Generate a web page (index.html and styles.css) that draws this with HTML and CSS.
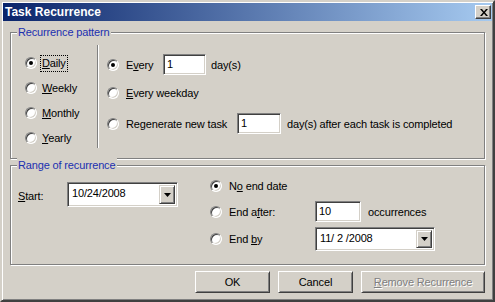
FILE: index.html
```html
<!DOCTYPE html>
<html>
<head>
<meta charset="utf-8">
<link rel="stylesheet" href="styles.css">
</head>
<body>
<div class="window">
  <div class="titlebar">
    <span class="title">Task Recurrence</span>
    <span class="close"><svg width="8" height="7" viewBox="0 0 8 7"><path d="M0 0h2l2 2.5L6 0h2L5 3.5 8 7H6L4 4.5 2 7H0l3-3.5z" fill="#000"/></svg></span>
  </div>
  <div class="content">
    <div class="group pattern">
      <span class="legend">Recurrence pattern</span>
      <div class="freq">
        <div class="opt"><span class="radio on"></span><span class="lbl focus"><u>D</u>aily</span></div>
        <div class="opt"><span class="radio"></span><span class="lbl"><u>W</u>eekly</span></div>
        <div class="opt"><span class="radio"></span><span class="lbl"><u>M</u>onthly</span></div>
        <div class="opt"><span class="radio"></span><span class="lbl"><u>Y</u>early</span></div>
      </div>
      <div class="sep"></div>
      <div class="pattern-opts">
        <div class="prow r1"><span class="radio on"></span><span class="plbl every">E<u>v</u>ery</span><span class="field w-every">1</span><span class="after">day(s)</span></div>
        <div class="prow r2"><span class="radio"></span><span class="plbl"><u>E</u>very weekday</span></div>
        <div class="prow r3"><span class="radio"></span><span class="plbl regen">Regenerate new task</span><span class="field w-regen">1</span><span class="after2">day(s) after each task is completed</span></div>
      </div>
    </div>
    <div class="group range">
      <span class="legend">Range of recurrence</span>
      <div class="start">
        <span class="start-lbl"><u>S</u>tart:</span>
        <div class="combo start-combo"><span class="cval">10/24/2008</span><span class="drop"><svg width="7" height="4" viewBox="0 0 7 4"><path d="M0 0h7L3.5 4z" fill="#000"/></svg></span></div>
      </div>
      <div class="ends">
        <div class="erow e1"><span class="radio on"></span><span class="elbl">N<u>o</u> end date</span></div>
        <div class="erow e2"><span class="ecell"><span class="radio"></span><span class="elbl">End a<u>f</u>ter:</span></span><span class="field w-occ">10</span><span class="after3">occurrences</span></div>
        <div class="erow e3"><span class="ecell"><span class="radio"></span><span class="elbl">End <u>b</u>y</span></span><div class="combo end-combo"><span class="cval">11/ 2 /2008</span><span class="drop"><svg width="7" height="4" viewBox="0 0 7 4"><path d="M0 0h7L3.5 4z" fill="#000"/></svg></span></div></div>
      </div>
    </div>
    <div class="buttons">
      <span class="btn ok">OK</span>
      <span class="btn cancel">Cancel</span>
      <span class="btn remove disabled"><u>R</u>emove Recurrence</span>
    </div>
  </div>
</div>
</body>
</html>
```

FILE: styles.css
```css
* { box-sizing: border-box; }
html, body { margin: 0; padding: 0; }
body {
  width: 495px;
  height: 302px;
  background: #d4d0c8;
  font-family: "Liberation Sans", Arial, sans-serif;
  font-size: 11px;
  letter-spacing: -0.15px;
  color: #000;
}
u { text-decoration: underline; text-underline-offset: 1px; }
.window {
  width: 495px;
  height: 302px;
  background: #d4d0c8;
  border: 2px solid;
  border-color: #d4d0c8 #404040 #404040 #d4d0c8;
  box-shadow: inset 1px 1px 0 #fff, inset -1px -1px 0 #808080;
  padding: 1px;
  display: flex;
  flex-direction: column;
}
.titlebar {
  height: 18px;
  background: linear-gradient(to right, #0a246a, #a6caf0);
  display: flex;
  align-items: center;
  justify-content: space-between;
  padding: 0 1px 0 2px;
}
.title {
  color: #fff;
  font-weight: bold;
  font-size: 12px;
  letter-spacing: 0;
  line-height: 14px;
}
.close {
  width: 16px;
  height: 14px;
  background: #d4d0c8;
  border: 1px solid;
  border-color: #fff #404040 #404040 #fff;
  box-shadow: inset -1px -1px 0 #808080;
  display: flex;
  align-items: center;
  justify-content: center;
  padding-left: 1px;
}
.close svg { display: block; }
.content {
  flex: 1;
  padding: 0 7px;
  display: flex;
  flex-direction: column;
}
.group {
  position: relative;
  width: 475px;
  border: 1px solid #808080;
  box-shadow: inset 1px 1px 0 #fff, 1px 1px 0 #fff;
  display: flex;
}
.legend {
  position: absolute;
  left: 6px;
  top: -8px;
  padding: 0 2px 0 1px;
  background: #d4d0c8;
  color: #1b2fb0;
  line-height: 14px;
}
.pattern {
  margin-top: 11px;
  height: 127px;
  padding: 12px 0 0 14px;
}
.freq {
  width: 72px;
  padding-top: 10px;
  display: flex;
  flex-direction: column;
  gap: 9px;
}
.opt {
  height: 16px;
  display: flex;
  align-items: center;
  gap: 5px;
}
.lbl { line-height: 13px; }
.focus { outline: 1px dotted #000; outline-offset: 1px; }
.radio {
  position: relative;
  width: 12px;
  height: 12px;
  flex: none;
  border-radius: 50%;
  background: #fff;
  border: 1px solid;
  border-color: #808080 #fff #fff #808080;
  box-shadow: inset 1px 1px 0 #404040, inset -1px -1px 0 #d4d0c8;
}
.radio.on::after {
  content: "";
  position: absolute;
  left: 3px;
  top: 3px;
  width: 4px;
  height: 4px;
  border-radius: 50%;
  background: #000;
}
.sep {
  width: 2px;
  height: 103px;
  border-left: 1px solid #808080;
  border-right: 1px solid #fff;
}
.pattern-opts {
  margin-left: 8px;
  padding-top: 9px;
  display: flex;
  flex-direction: column;
}
.prow { display: flex; align-items: center; }
.r1 { height: 21px; }
.r2 { height: 16px; margin-top: 10px; }
.r3 { height: 21px; margin-top: 12px; }
.plbl { margin-left: 7px; }
.every { width: 37px; }
.regen { width: 111px; }
.field {
  height: 21px;
  background: #fff;
  border: 1px solid;
  border-color: #808080 #fff #fff #808080;
  box-shadow: inset 1px 1px 0 #404040, inset -1px -1px 0 #d4d0c8;
  padding: 2px 0 0 3px;
  line-height: 15px;
}
.w-every { width: 43px; }
.w-regen { width: 44px; }
.w-occ { width: 46px; }
.after { margin-left: 5px; }
.after2 { margin-left: 6px; }
.after3 { margin-left: 7px; }
.range {
  margin-top: 6px;
  height: 100px;
  padding: 12px 0 0 7px;
}
.start {
  display: flex;
  align-items: flex-start;
}
.start-lbl {
  width: 49px;
  margin-top: 12px;
}
.combo {
  display: flex;
  justify-content: space-between;
  background: #fff;
  border: 1px solid;
  border-color: #808080 #fff #fff #808080;
  box-shadow: inset 1px 1px 0 #404040, inset -1px -1px 0 #d4d0c8;
  padding: 2px;
}
.start-combo { width: 111px; height: 25px; margin-top: 4px; }
.end-combo { width: 120px; height: 24px; }
.cval { padding: 1px 0 0 2px; line-height: 15px; }
.drop {
  width: 16px;
  background: #d4d0c8;
  border: 1px solid;
  border-color: #d4d0c8 #404040 #404040 #d4d0c8;
  box-shadow: inset 1px 1px 0 #fff, inset -1px -1px 0 #808080;
  display: flex;
  align-items: center;
  justify-content: center;
}
.drop svg { display: block; }
.ends {
  margin-left: 32px;
  display: flex;
  flex-direction: column;
}
.erow { display: flex; align-items: center; }
.e1 { height: 16px; }
.e2 { height: 21px; margin-top: 7px; }
.e3 { height: 24px; margin-top: 5px; }
.ecell { width: 105px; display: flex; align-items: center; }
.elbl { margin-left: 7px; }
.buttons {
  margin-top: 6px;
  display: flex;
  justify-content: flex-end;
  gap: 8px;
}
.btn {
  height: 22px;
  display: flex;
  align-items: center;
  justify-content: center;
  border: 1px solid;
  border-color: #fff #404040 #404040 #fff;
  box-shadow: inset 1px 1px 0 #d4d0c8, inset -1px -1px 0 #808080;
}
.ok, .cancel { width: 75px; }
.remove { width: 124px; }
.disabled { color: #808080; text-shadow: 1px 1px 0 #fff; }
```
